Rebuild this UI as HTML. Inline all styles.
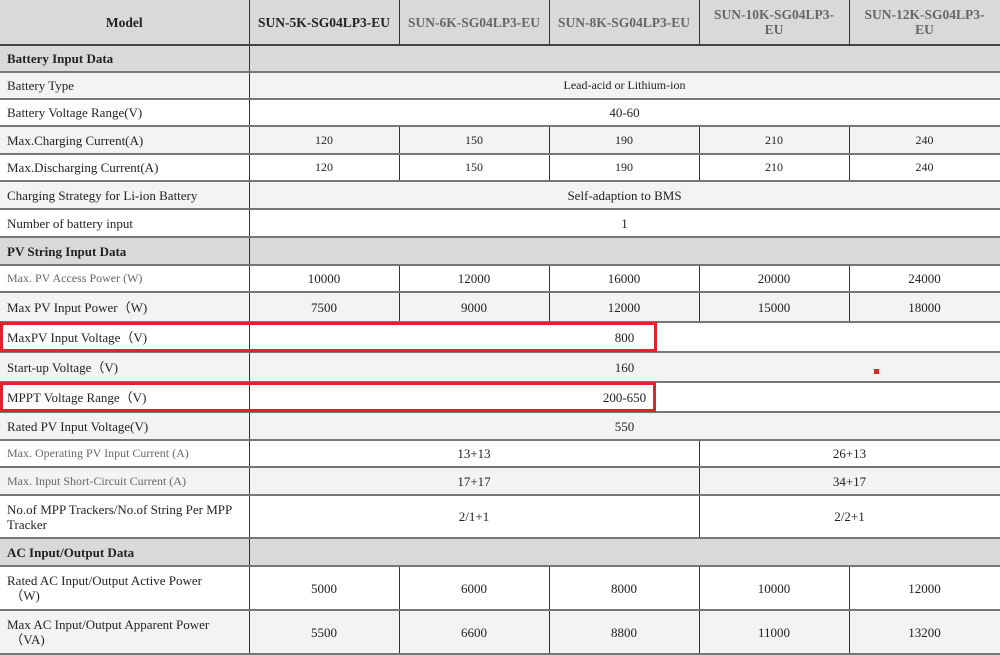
<!DOCTYPE html>
<html><head><meta charset="utf-8"><style>
*{margin:0;padding:0;box-sizing:border-box}
body{width:1000px;height:654px;overflow:hidden;background:#fff;font-family:"Liberation Serif",serif;font-size:13px;color:#222;position:relative}
table{border-collapse:collapse;table-layout:fixed;width:1000px;position:absolute;left:0;top:0}
td{border-bottom:2px solid #777;border-right:1px solid #333;text-align:center;vertical-align:middle;padding:0;overflow:hidden;line-height:15px}
td.l{text-align:left;padding-left:7px}
tr.h td{background:#d9d9d9;font-weight:bold;border-bottom:2px solid #444;font-size:13.5px}
tr.s td{background:#d9d9d9;font-weight:bold}
tr.g td{background:#f3f3f3}
tr.w td{background:#fff}
.gr{color:#666}
.sm{font-size:12px}
.red{position:absolute;border:3px solid #e8202a}
</style></head><body>
<table>
<colgroup><col style="width:249px"><col style="width:150px"><col style="width:150px"><col style="width:150px"><col style="width:150px"><col style="width:151px"></colgroup>
<tr class="h" style="height:45px"><td>Model</td><td>SUN-5K-SG04LP3-EU</td><td class="gr">SUN-6K-SG04LP3-EU</td><td class="gr">SUN-8K-SG04LP3-EU</td><td class="gr">SUN-10K-SG04LP3-<br>EU</td><td class="gr">SUN-12K-SG04LP3-<br>EU</td></tr>
<tr class="s" style="height:27px"><td class="l">Battery Input Data</td><td colspan="5"></td></tr>
<tr class="g" style="height:27px"><td class="l">Battery Type</td><td colspan="5" class="sm">Lead-acid or Lithium-ion</td></tr>
<tr class="w" style="height:27px"><td class="l">Battery Voltage Range(V)</td><td colspan="5">40-60</td></tr>
<tr class="g" style="height:28px"><td class="l">Max.Charging Current(A)</td><td class="sm">120</td><td class="sm">150</td><td class="sm">190</td><td class="sm">210</td><td class="sm">240</td></tr>
<tr class="w" style="height:27px"><td class="l">Max.Discharging Current(A)</td><td class="sm">120</td><td class="sm">150</td><td class="sm">190</td><td class="sm">210</td><td class="sm">240</td></tr>
<tr class="g" style="height:28px"><td class="l">Charging Strategy for Li-ion Battery</td><td colspan="5">Self-adaption to BMS</td></tr>
<tr class="w" style="height:28px"><td class="l">Number of battery input</td><td colspan="5">1</td></tr>
<tr class="s" style="height:28px"><td class="l">PV String Input Data</td><td colspan="5"></td></tr>
<tr class="w" style="height:27px"><td class="l gr sm">Max. PV Access Power (W)</td><td>10000</td><td>12000</td><td>16000</td><td>20000</td><td>24000</td></tr>
<tr class="g" style="height:30px"><td class="l">Max PV Input Power（W)</td><td>7500</td><td>9000</td><td>12000</td><td>15000</td><td>18000</td></tr>
<tr class="w" style="height:30px"><td class="l">MaxPV Input Voltage（V)</td><td colspan="5">800</td></tr>
<tr class="g" style="height:30px"><td class="l">Start-up Voltage（V)</td><td colspan="5">160</td></tr>
<tr class="w" style="height:30px"><td class="l">MPPT Voltage Range（V)</td><td colspan="5">200-650</td></tr>
<tr class="g" style="height:28px"><td class="l">Rated PV Input Voltage(V)</td><td colspan="5">550</td></tr>
<tr class="w" style="height:27px"><td class="l gr sm">Max. Operating PV Input Current (A)</td><td colspan="3">13+13</td><td colspan="2">26+13</td></tr>
<tr class="g" style="height:28px"><td class="l gr sm">Max. Input Short-Circuit Current (A)</td><td colspan="3">17+17</td><td colspan="2">34+17</td></tr>
<tr class="w" style="height:43px"><td class="l">No.of MPP Trackers/No.of String Per MPP Tracker</td><td colspan="3">2/1+1</td><td colspan="2">2/2+1</td></tr>
<tr class="s" style="height:28px"><td class="l">AC Input/Output Data</td><td colspan="5"></td></tr>
<tr class="w" style="height:44px"><td class="l">Rated AC Input/Output Active Power<br>&nbsp;（W)</td><td>5000</td><td>6000</td><td>8000</td><td>10000</td><td>12000</td></tr>
<tr class="g" style="height:44px"><td class="l">Max AC Input/Output Apparent Power<br>&nbsp;（VA)</td><td>5500</td><td>6600</td><td>8800</td><td>11000</td><td>13200</td></tr>
</table>
<div class="red" style="left:0;top:322px;width:657px;height:30px"></div>
<div class="red" style="left:0;top:382px;width:656px;height:30px"></div>
<div style="position:absolute;left:874px;top:369px;width:5px;height:5px;background:#e8202a"></div>
</body></html>
